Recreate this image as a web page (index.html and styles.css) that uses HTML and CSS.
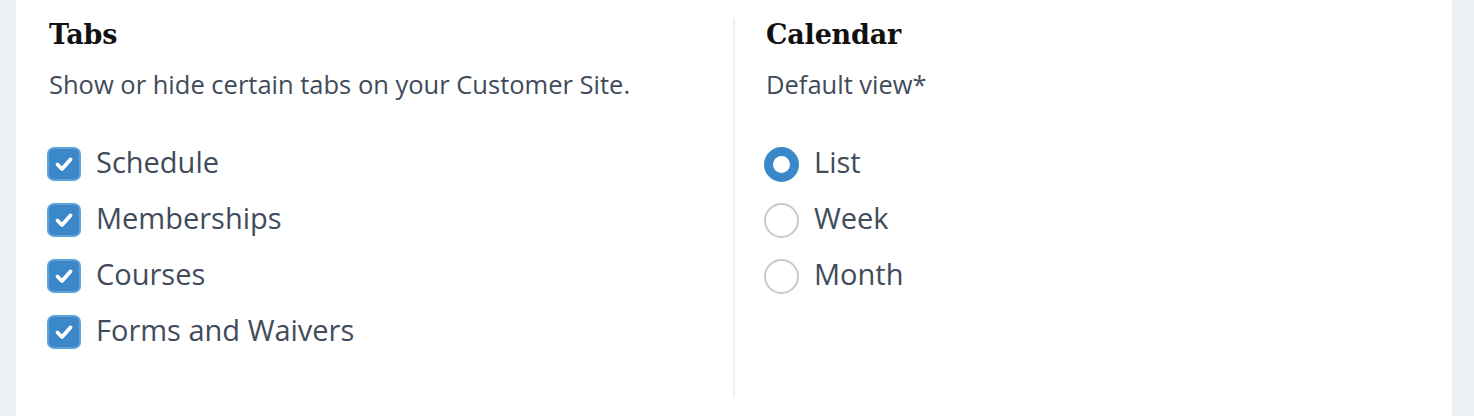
FILE: index.html
```html
<!DOCTYPE html>
<html>
<head>
<meta charset="utf-8">
<link rel="stylesheet" href="styles.css">
</head>
<body>
<div class="card">
  <section class="col">
    <h2 class="title">Tabs</h2>
    <p class="desc">Show or hide certain tabs on your Customer Site.</p>
    <ul class="options">
      <li class="option"><span class="check"><svg viewBox="0 0 34 34" width="34" height="34"><path d="M10.5 17.5 L15 22 L23.5 12.5" fill="none" stroke="#fff" stroke-width="3.8" stroke-linecap="round" stroke-linejoin="round"/></svg></span><span class="label">Schedule</span></li>
      <li class="option"><span class="check"><svg viewBox="0 0 34 34" width="34" height="34"><path d="M10.5 17.5 L15 22 L23.5 12.5" fill="none" stroke="#fff" stroke-width="3.8" stroke-linecap="round" stroke-linejoin="round"/></svg></span><span class="label">Memberships</span></li>
      <li class="option"><span class="check"><svg viewBox="0 0 34 34" width="34" height="34"><path d="M10.5 17.5 L15 22 L23.5 12.5" fill="none" stroke="#fff" stroke-width="3.8" stroke-linecap="round" stroke-linejoin="round"/></svg></span><span class="label">Courses</span></li>
      <li class="option"><span class="check"><svg viewBox="0 0 34 34" width="34" height="34"><path d="M10.5 17.5 L15 22 L23.5 12.5" fill="none" stroke="#fff" stroke-width="3.8" stroke-linecap="round" stroke-linejoin="round"/></svg></span><span class="label">Forms and Waivers</span></li>
    </ul>
  </section>
  <section class="col col-right">
    <h2 class="title">Calendar</h2>
    <p class="desc">Default view*</p>
    <ul class="options">
      <li class="option"><span class="radio radio-on"></span><span class="label">List</span></li>
      <li class="option"><span class="radio"></span><span class="label">Week</span></li>
      <li class="option"><span class="radio"></span><span class="label">Month</span></li>
    </ul>
  </section>
</div>
</body>
</html>
```
FILE: styles.css
```css
html, body {
  margin: 0;
  padding: 0;
  background: #edf1f5;
  height: 100%;
}
body {
  font-family: "Open Sans", "Noto Sans", sans-serif;
  color: #414b5a;
  overflow: hidden;
}
.card {
  margin-left: 16px;
  width: 1436px;
  height: 416px;
  background: #fff;
  display: grid;
  grid-template-columns: 717px 1fr;
  box-sizing: border-box;
}
.col {
  margin-top: 18px;
  margin-bottom: 19px;
  padding: 0 33px;
}
.col-right {
  border-left: 2px solid #efefef;
  padding-left: 31px;
}
.title {
  margin: 0;
  font-family: "DejaVu Serif", serif;
  font-weight: bold;
  font-size: 27px;
  line-height: 34px;
  color: #111;
  letter-spacing: -0.2px;
}
.desc {
  margin: 15px 0 0;
  font-size: 25.5px;
  line-height: 34px;
}
.options {
  list-style: none;
  margin: 35px 0 0;
  padding: 0;
}
.option {
  display: flex;
  align-items: center;
  height: 56px;
}
.check {
  width: 34px;
  height: 34px;
  box-sizing: border-box;
  border-radius: 7px;
  background: #3a87c9;
  border: 2px solid #64a3db;
  display: flex;
  align-items: center;
  justify-content: center;
  flex: none;
  margin-left: -2px;
}
.check svg { display: block; margin: -2px; }
.radio {
  width: 35px;
  height: 35px;
  box-sizing: border-box;
  border-radius: 50%;
  border: 2px solid #c9c9c9;
  background: #fff;
  flex: none;
  margin-left: -2px;
}
.radio-on {
  background: #3a87c9;
  border: 9px solid #3a87c9;
  box-shadow: inset 0 0 0 1px #5d9fd8;
  position: relative;
}
.radio-on::after {
  content: "";
  position: absolute;
  inset: 0;
  background: #fff;
  border-radius: 50%;
}
.label {
  margin-left: 15px;
  margin-bottom: 5px;
  font-size: 29px;
  line-height: 40px;
}
```
